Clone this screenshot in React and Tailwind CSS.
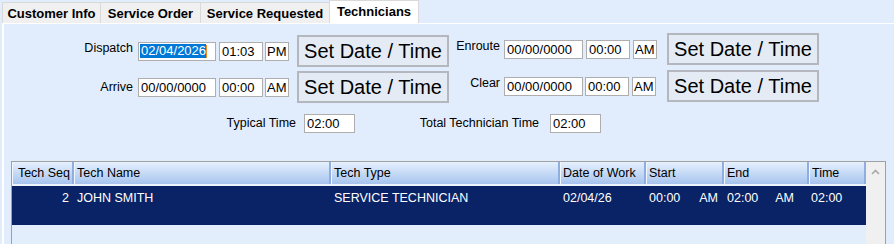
import React from "react";

function Box({ className, children }) {
  return (
    <div
      className={
        "h-[19px] flex items-center bg-white border border-[#aeaeae] pl-[1px] text-[13px] leading-none text-black whitespace-nowrap overflow-hidden " +
        className
      }
    >
      {children}
    </div>
  );
}

function SetButton() {
  return (
    <div className="w-[152px] h-[32px] flex items-center justify-center bg-[#e5ebf4] border-2 border-[#b4b8be] text-[20px] leading-none text-black">
      Set Date / Time
    </div>
  );
}

function DateGroup({ label, labelClass, lift, date, time, ampm, groupClass, gaps, dateW, selected }) {
  return (
    <div className={"flex items-center " + groupClass}>
      <div className={"text-right text-[12.5px] leading-none text-black " + labelClass + " " + lift}>{label}</div>
      <Box className={gaps[0] + " " + dateW}>
        {selected ? (
          <span className="flex items-center">
            <span className="bg-[#0078d7] text-white leading-[14px] pl-[1px]">{date}</span>
            <span className="w-[1px] h-[13px] bg-[#f08a24]" />
          </span>
        ) : (
          <span className="pl-[1px]">{date}</span>
        )}
      </Box>
      <Box className={gaps[1] + " w-[44px]"}>
        <span className="pl-[1px]">{time}</span>
      </Box>
      <Box className={gaps[2] + " w-[24px]"}>{ampm}</Box>
      <div className={gaps[3]}>
        <SetButton />
      </div>
    </div>
  );
}

const cols = [
  { name: "Tech Seq", w: "w-[62px]", align: "justify-end pr-[2px]" },
  { name: "Tech Name", w: "w-[257px]", align: "pl-[2px]" },
  { name: "Tech Type", w: "w-[229px]", align: "pl-[2px]" },
  { name: "Date of Work", w: "w-[86px]", align: "pl-[2px]" },
  { name: "Start", w: "w-[78px]", align: "pl-[2px]" },
  { name: "End", w: "w-[85px]", align: "pl-[2px]" },
  { name: "Time", w: "w-[57px]", align: "pl-[2px]" },
];

export default function App() {
  const tabs = [
    { name: "Customer Info", w: "w-[99px]" },
    { name: "Service Order", w: "w-[101px]" },
    { name: "Service Requested", w: "w-[130px]" },
  ];

  return (
    <div className="w-[894px] h-[244px] overflow-hidden bg-[#e1edfc] flex flex-col font-['Liberation_Sans',Arial,sans-serif]">
      {/* tab strip */}
      <div className="flex items-end h-[23px] pl-[2px] shrink-0">
        {tabs.map((t) => (
          <div
            key={t.name}
            className={
              "h-[21px] flex items-center justify-center bg-[#f0f0f0] border border-b-0 border-[#d9d9d9] text-[13px] font-bold text-black leading-none -ml-[1px] first:ml-0 pt-[1px] " +
              t.w
            }
          >
            {t.name}
          </div>
        ))}
        <div className="h-[23px] w-[90px] -ml-[1px] flex items-center justify-center bg-white border border-b-0 border-[#d9d9d9] text-[13px] font-bold text-black leading-none pb-[1px]">
          Technicians
        </div>
      </div>

      {/* page */}
      <div className="flex-1 ml-[2px] border-l-2 border-t border-white flex flex-col">
        <div className="flex h-[34px] mt-[9px]">
          <DateGroup
            label="Dispatch"
            labelClass="w-[129px] pl-[56px]"
            lift="-mt-[5px]"
            date="02/04/2026"
            time="01:03"
            ampm="PM"
            groupClass="self-end"
            dateW="w-[78px]"
            gaps={["ml-[5px]", "ml-[3px]", "ml-[2px]", "ml-[8px]"]}
            selected
          />
          <DateGroup
            label="Enroute"
            labelClass="w-[51px]"
            lift="-mt-[5px]"
            date="00/00/0000"
            time="00:00"
            ampm="AM"
            groupClass="self-start"
            dateW="w-[79px]"
            gaps={["ml-[4px]", "ml-[3px]", "ml-[3px]", "ml-[10px]"]}
          />
        </div>
        <div className="flex h-[33px] mt-[3px]">
          <DateGroup
            label="Arrive"
            labelClass="w-[129px] pl-[56px]"
            lift="mt-[1px]"
            date="00/00/0000"
            time="00:00"
            ampm="AM"
            groupClass="self-end"
            dateW="w-[78px]"
            gaps={["ml-[5px]", "ml-[3px]", "ml-[2px]", "ml-[8px]"]}
          />
          <DateGroup
            label="Clear"
            labelClass="w-[51px]"
            lift="-mt-[5px]"
            date="00/00/0000"
            time="00:00"
            ampm="AM"
            groupClass="self-start"
            dateW="w-[79px]"
            gaps={["ml-[4px]", "ml-[2px]", "ml-[3px]", "ml-[11px]"]}
          />
        </div>

        <div className="flex items-center h-[19px] mt-[11px]">
          <div className="ml-[196px] w-[96px] text-right text-[12.5px] leading-none text-black">Typical Time</div>
          <Box className="ml-[8px] w-[51px]">
            <span className="pl-[1px]">02:00</span>
          </Box>
          <div className="ml-[10px] w-[174px] text-right text-[12.5px] leading-none text-black">
            Total Technician Time
          </div>
          <Box className="ml-[11px] w-[51px]">
            <span className="pl-[1px]">02:00</span>
          </Box>
        </div>

        {/* grid */}
        <div className="mt-[28px] ml-[7px] w-[875px] flex-1 border border-b-0 border-[#a0a0a0] flex">
          <div className="w-[854px] flex flex-col">
            <div className="flex h-[22px] bg-linear-to-b from-[#e6f0fd] to-[#a7c4ee]">
              {cols.map((c) => (
                <div
                  key={c.name}
                  className={
                    "h-full flex items-center border-r-2 border-r-[#8eaee2] border-l border-l-[#f2f7ff] text-[12.5px] leading-none text-black whitespace-nowrap overflow-hidden " +
                    c.w +
                    " " +
                    c.align
                  }
                >
                  {c.name}
                </div>
              ))}
            </div>
            <div className="h-[2px] bg-[#eef4fd]" />
            <div className="h-[39px] bg-[#0a2367] flex text-white text-[12.5px] leading-none pt-[6px]">
              <div className="w-[62px] text-right pr-[5px]">2</div>
              <div className="w-[257px] pl-[3px]">JOHN SMITH</div>
              <div className="w-[229px] pl-[3px]">SERVICE TECHNICIAN</div>
              <div className="w-[86px] pl-[3px]">02/04/26</div>
              <div className="w-[78px] pl-[3px] flex">
                <span>00:00</span>
                <span className="ml-[19px]">AM</span>
              </div>
              <div className="w-[85px] pl-[3px] flex">
                <span>02:00</span>
                <span className="ml-[17px]">AM</span>
              </div>
              <div className="w-[57px] pl-[2px]">02:00</div>
            </div>
            <div className="flex-1 bg-[#e3eefd]" />
          </div>
          <div className="w-[19px] bg-[#f0f0f0] flex justify-center pt-[7px]">
            <svg width="9" height="6" viewBox="0 0 9 6">
              <polyline points="1,5 4.5,1.5 8,5" fill="none" stroke="#a8a8a8" strokeWidth="1.6" />
            </svg>
          </div>
        </div>
      </div>
    </div>
  );
}
